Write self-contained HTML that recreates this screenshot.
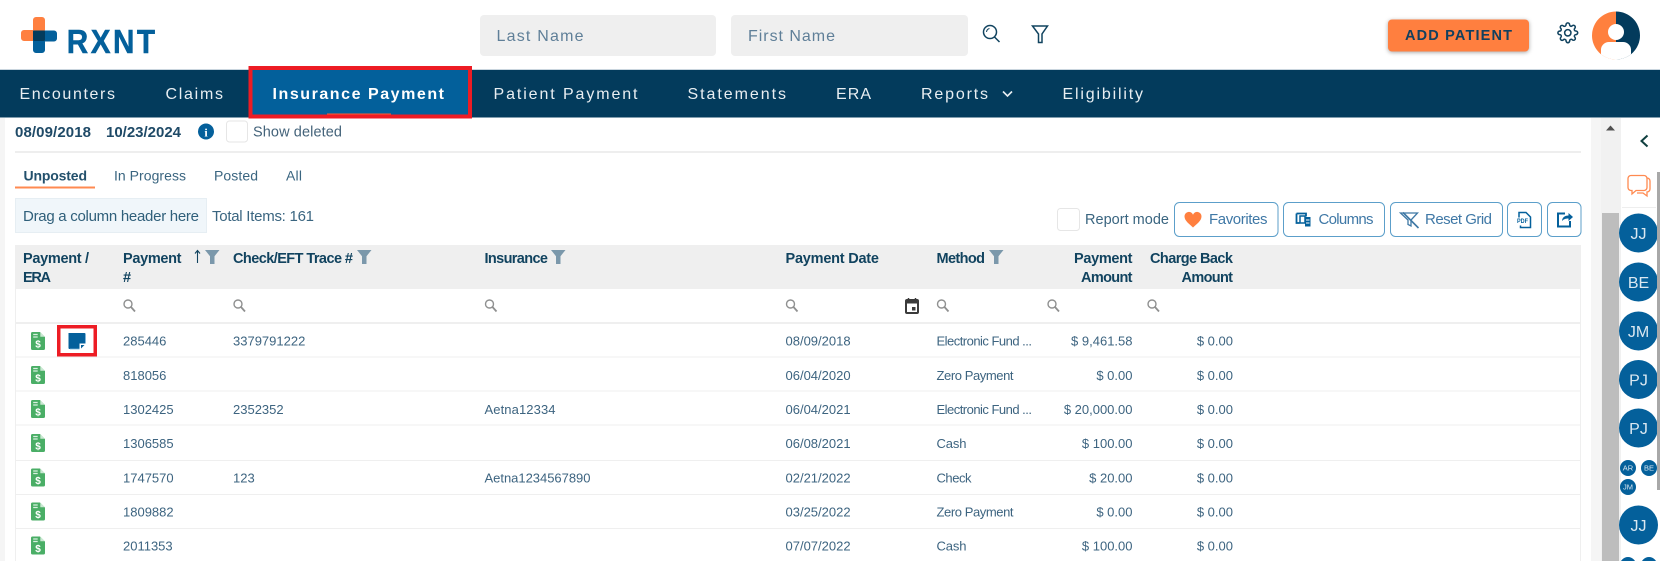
<!DOCTYPE html>
<html><head><meta charset="utf-8"><title>RXNT</title>
<style>
html,body{margin:0;padding:0;background:#fff;width:1660px;height:561px;overflow:hidden}
svg{display:block}
text{font-family:"Liberation Sans",sans-serif}
.nav{font-size:16px;fill:#e8eef2}
.r{font-size:13px;fill:#3d6480}
.h{font-size:14.5px;font-weight:bold;fill:#11435f}
.t{font-size:14.5px;fill:#3a6580}
.b{font-size:15px;fill:#3f78a6}
.av{font-size:16px;fill:#dbe8f1;text-anchor:middle}
.sm{font-size:7.5px;fill:#dbe8f1;text-anchor:middle}
</style></head><body>
<svg width="1660" height="561" viewBox="0 0 1660 561" xmlns="http://www.w3.org/2000/svg">
<defs>
<g id="s"><circle cx="5" cy="5" r="4" fill="none" stroke="#8f9090" stroke-width="1.4"/><path d="M8 8l4 4.5" stroke="#8f9090" stroke-width="1.8" fill="none"/></g>
<path id="f" d="M0 0h14.5l-5 6.2v7.8h-4.500v-7.800z" fill="#7b98ab"/>
<g id="p"><path d="M0 1.500a1.500 1.500 0 0 1 1.500-1.500h7.500l5 5v11.500a1.500 1.500 0 0 1-1.500 1.500h-11a1.500 1.500 0 0 1-1.500-1.500z" fill="#4aae66"/><path d="M9.300 0l4.700 4.700h-4.700z" fill="#c9e8d2"/><path d="M2.200 2.500h4.500M2.200 5h4.500" stroke="#d8f0df" stroke-width="1.300"/><text x="7" y="15.500" text-anchor="middle" style="font-size:10px;font-weight:bold;fill:#fff">$</text></g>
</defs>
<rect width="1660" height="561" fill="#fff"/>

<!-- logo -->
<path d="M33 20a3 3 0 0 1 3-3h6a3 3 0 0 1 3 3v10h-12z M21 33a3 3 0 0 1 3-3h21v11h-21a3 3 0 0 1-3-3z" fill="#ff8040"/>
<path d="M33 30.500h21a3 3 0 0 1 3 3v5a3 3 0 0 1-3 3h-9v8.500a3 3 0 0 1-3 3h-6a3 3 0 0 1-3-3z" fill="#04609b"/>
<rect x="33" y="30.500" width="12" height="10.500" rx="1.500" fill="#033b5c"/>
<text transform="translate(66.800,52.800) scale(.9,1)" x="0" y="0" textLength="98" lengthAdjust="spacing" style="font-size:33px;font-weight:bold;fill:#04609b;stroke:#04609b;stroke-width:.5">RXNT</text>

<!-- search inputs -->
<rect x="480" y="15" width="236" height="41" rx="4" fill="#efefef"/>
<rect x="731" y="15" width="237" height="41" rx="4" fill="#efefef"/>
<text x="496.500" y="41" textLength="87" style="font-size:16px;fill:#5f7f98">Last Name</text>
<text x="748" y="41" textLength="87" style="font-size:16px;fill:#5f7f98">First Name</text>
<g fill="none" stroke="#11435f" stroke-width="1.500"><circle cx="990" cy="32" r="6.500"/><path d="M994.500 37l5 5"/><path d="M986.500 32a4 4 0 0 1 3-3.500" stroke-width="1"/>
<path d="M1032.500 26h15l-5.500 8v8.500h-3.500v-8.500z"/></g>

<!-- add patient -->
<rect x="1388" y="19.500" width="141" height="32" rx="4" fill="#ff7f3f" style="filter:drop-shadow(0 1px 2px rgba(0,0,0,.35))"/>
<text x="1405" y="40" textLength="107" style="font-size:14.500px;font-weight:bold;fill:#11405f">ADD PATIENT</text>
<!-- gear -->
<g transform="translate(1557,22) scale(.9)" fill="none" stroke="#11435f" stroke-width="1.700"><circle cx="12" cy="12" r="3.500"/><path d="M19.400 15a1.650 1.650 0 0 0 .33 1.820l.06.06a2 2 0 0 1 0 2.830 2 2 0 0 1-2.830 0l-.06-.06a1.650 1.650 0 0 0-1.820-.33 1.650 1.650 0 0 0-1 1.510V21a2 2 0 0 1-2 2 2 2 0 0 1-2-2v-.09A1.650 1.650 0 0 0 9 19.400a1.650 1.650 0 0 0-1.820.33l-.06.06a2 2 0 0 1-2.830 0 2 2 0 0 1 0-2.830l.06-.06a1.650 1.650 0 0 0 .33-1.820 1.650 1.650 0 0 0-1.510-1H3a2 2 0 0 1-2-2 2 2 0 0 1 2-2h.09A1.650 1.650 0 0 0 4.600 9a1.650 1.650 0 0 0-.33-1.820l-.06-.06a2 2 0 0 1 0-2.830 2 2 0 0 1 2.830 0l.06.06a1.650 1.650 0 0 0 1.820.33H9a1.650 1.650 0 0 0 1-1.510V3a2 2 0 0 1 2-2 2 2 0 0 1 2 2v.09a1.650 1.650 0 0 0 1 1.510 1.650 1.650 0 0 0 1.820-.33l.06-.06a2 2 0 0 1 2.830 0 2 2 0 0 1 0 2.830l-.06.06a1.650 1.650 0 0 0-.33 1.820V9a1.650 1.650 0 0 0 1.510 1H21a2 2 0 0 1 2 2 2 2 0 0 1-2 2h-.09a1.650 1.650 0 0 0-1.510 1z"/></g>
<!-- avatar -->
<clipPath id="ac"><circle cx="1616" cy="35.500" r="24"/></clipPath>
<g clip-path="url(#ac)"><rect x="1592" y="11" width="24" height="49" fill="#ff803e"/><rect x="1616" y="11" width="24" height="49" fill="#033b5c"/>
<circle cx="1616" cy="32" r="8" fill="#fff"/><path d="M1601 60v-11a8 8 0 0 1 8-7h14a8 8 0 0 1 8 7v11z" fill="#fff"/></g>

<!-- nav -->
<rect x="0" y="69" width="1660" height="1" fill="#c9d5de"/>
<rect x="0" y="70" width="1660" height="47.500" fill="#033b5c"/>
<rect x="250.500" y="68" width="219.500" height="48.500" fill="#03609b" stroke="#ed1c24" stroke-width="4"/>
<rect x="327" y="113.500" width="64" height="1" fill="#ff5a30"/>
<text class="nav" x="19.500" y="99" textLength="95.500">Encounters</text>
<text class="nav" x="165.500" y="99" textLength="57.500">Claims</text>
<text class="nav" x="272.500" y="99" textLength="171.500" style="font-weight:bold;fill:#fff">Insurance Payment</text>
<text class="nav" x="493.500" y="99" textLength="144">Patient Payment</text>
<text class="nav" x="687.500" y="99" textLength="98.500">Statements</text>
<text class="nav" x="836" y="99" textLength="35">ERA</text>
<text class="nav" x="921" y="99" textLength="67">Reports</text>
<path d="M1003 91.500l4.500 4.500 4.500-4.500" fill="none" stroke="#e8eef2" stroke-width="1.600"/>
<text class="nav" x="1062.500" y="99" textLength="80.500">Eligibility</text>

<!-- side bands -->
<rect x="0" y="118" width="5" height="443" fill="#f5f5f5"/>
<rect x="1591" y="118" width="11" height="443" fill="#f5f5f5"/>
<rect x="1601" y="118" width="20" height="443" fill="#f1f1f1"/>
<path d="M1606 130.500l4.500-5 4.500 5z" fill="#505050"/>
<rect x="1602" y="213" width="17" height="348" fill="#bdbdbd"/>

<!-- date row -->
<text x="15" y="137" textLength="76" style="font-size:15px;font-weight:bold;fill:#1f4a67">08/09/2018</text>
<text x="106" y="137" textLength="75" style="font-size:15px;font-weight:bold;fill:#1f4a67">10/23/2024</text>
<circle cx="206" cy="131.500" r="8" fill="#04609b"/>
<text x="206" y="136.500" text-anchor="middle" style="font-size:12px;font-weight:bold;font-family:'Liberation Serif',serif;fill:#fff">i</text>
<rect x="226.500" y="121" width="21" height="21" rx="3" fill="#fff" stroke="#e6e6e6"/>
<text class="t" x="253" y="136.500" textLength="89" style="fill:#44637a">Show deleted</text>
<rect x="15" y="151" width="1566" height="2" fill="#eeeeee"/>

<!-- tabs -->
<text x="23.500" y="180.500" textLength="63.500" style="font-size:14px;font-weight:bold;fill:#23506c">Unposted</text>
<text x="114" y="180.500" textLength="72" style="font-size:14px;fill:#3a6580">In Progress</text>
<text x="214" y="180.500" textLength="44" style="font-size:14px;fill:#3a6580">Posted</text>
<text x="286" y="180.500" textLength="16" style="font-size:14px;fill:#3a6580">All</text>
<rect x="15" y="186.500" width="80" height="2" fill="#ff8a50"/>

<!-- drag box -->
<rect x="15.500" y="198.500" width="191" height="34" fill="#f0f6fa" stroke="#e6eef3"/>
<text x="23" y="221" textLength="176" style="font-size:15px;fill:#2f5f7a">Drag a column header here</text>
<text x="212" y="221" textLength="102" style="font-size:15px;fill:#3a6580">Total Items: 161</text>

<!-- toolbar -->
<rect x="1057.500" y="208.500" width="22" height="22" rx="3" fill="#fff" stroke="#e6e6e6"/>
<text class="t" x="1085" y="224" textLength="84">Report mode</text>
<g fill="#fff" stroke="#5c9fca" stroke-width="1">
<rect x="1174.500" y="202.500" width="103.500" height="34" rx="5"/>
<rect x="1283.500" y="202.500" width="101" height="34" rx="5"/>
<rect x="1390.500" y="202.500" width="112" height="34" rx="5"/>
<rect x="1507.500" y="202.500" width="34" height="34" rx="5"/>
<rect x="1547.500" y="202.500" width="33.500" height="34" rx="5"/>
</g>
<path d="M1193 227.500c-3-3-8.500-6.500-8.500-11a4.400 4.400 0 0 1 8.500-1.800 4.400 4.400 0 0 1 8.500 1.800c0 4.500-5.500 8-8.500 11z" fill="#ff7f3f"/>
<text class="b" x="1209" y="224" textLength="58.500">Favorites</text>
<!-- columns icon -->
<path d="M1296.500 213.500h9.500v3M1296.500 213.500v9.500h3" fill="none" stroke="#04609b" stroke-width="1.800"/>
<rect x="1300" y="216" width="5" height="7" fill="#fff" stroke="#04609b" stroke-width="1.500"/>
<rect x="1305" y="217" width="5.500" height="9.500" fill="#04609b"/><path d="M1306 220h3.500M1306 223h3.500" stroke="#fff" stroke-width="1"/>
<text class="b" x="1318.500" y="224" textLength="55">Columns</text>
<!-- reset icon -->
<path d="M1400.500 213h17l-6.500 7v6l-3-1.500v-4.500z" fill="none" stroke="#3e78a5" stroke-width="1.300"/>
<path d="M1403 212.500l15.500 15.500" stroke="#3e78a5" stroke-width="1.600"/>
<text class="b" x="1425" y="224" textLength="67">Reset Grid</text>
<!-- pdf icon -->
<path d="M1519 222v-9.500h7l4.500 4.500v10.500h-10v-2" fill="none" stroke="#04609b" stroke-width="1.500"/>
<rect x="1518" y="217.500" width="9" height="6" fill="#fff"/>
<text x="1522.500" y="223" text-anchor="middle" textLength="11" lengthAdjust="spacingAndGlyphs" style="font-size:6.500px;font-weight:bold;fill:#04609b">PDF</text>
<!-- export icon -->
<path d="M1565 213.500h-7v13h12v-5.500" fill="none" stroke="#04609b" stroke-width="2"/>
<path d="M1562 221c.3-3.500 2.500-5.500 6.500-5.500v-2.500l4.500 4-4.500 4v-2.500c-2.500 0-4.800.5-6.500 2.500z" fill="#04609b"/>

<!-- header -->
<rect x="15" y="245" width="1566" height="44" fill="#efefef"/>
<text class="h" x="23" y="263" textLength="66">Payment /</text>
<text class="h" x="23" y="282" textLength="28">ERA</text>
<text class="h" x="123" y="263" textLength="58.500">Payment</text>
<text class="h" x="123" y="282">#</text>
<path d="M197.500 263v-12M195 253.500l2.500-3 2.500 3" fill="none" stroke="#11435f" stroke-width="1.100"/>
<use href="#f" x="205" y="250"/>
<text class="h" x="233" y="263" textLength="120">Check/EFT Trace #</text>
<use href="#f" x="357" y="250"/>
<text class="h" x="484.500" y="263" textLength="63.500">Insurance</text>
<use href="#f" x="551" y="250"/>
<text class="h" x="785.500" y="263" textLength="93.500">Payment Date</text>
<text class="h" x="936.500" y="263" textLength="48.500">Method</text>
<use href="#f" x="989" y="250"/>
<text class="h" x="1074" y="263" textLength="58.500">Payment</text>
<text class="h" x="1081" y="282" textLength="51.500">Amount</text>
<text class="h" x="1150" y="263" textLength="83">Charge Back</text>
<text class="h" x="1181.500" y="282" textLength="51.500">Amount</text>

<!-- filter row -->
<use href="#s" x="123" y="299"/><use href="#s" x="233" y="299"/><use href="#s" x="484.500" y="299"/>
<use href="#s" x="785.500" y="299"/><use href="#s" x="936.500" y="299"/><use href="#s" x="1047" y="299"/><use href="#s" x="1147" y="299"/>
<path d="M905 301a2 2 0 0 1 2-2h10a2 2 0 0 1 2 2v11a2 2 0 0 1-2 2h-10a2 2 0 0 1-2-2z" fill="#3b3b3b"/><rect x="907" y="303.500" width="10" height="8.500" fill="#fff"/><rect x="912" y="307" width="3.500" height="3.500" fill="#3b3b3b"/><path d="M908.500 298v3M915.500 298v3" stroke="#3b3b3b" stroke-width="1.500"/>

<!-- row lines -->
<g fill="#efefef">
<rect x="15" y="322" width="1566" height="2"/>
<rect x="15" y="356.500" width="1566" height="1"/>
<rect x="15" y="390.500" width="1566" height="1"/>
<rect x="15" y="424.500" width="1566" height="1"/>
<rect x="15" y="460" width="1566" height="1"/>
<rect x="15" y="494" width="1566" height="1"/>
<rect x="15" y="528" width="1566" height="1"/>
<rect x="15" y="289" width="1" height="272"/>
<rect x="1580" y="289" width="1" height="272"/>
</g>

<!-- green icons -->
<use href="#p" x="31" y="332"/><use href="#p" x="31" y="366"/><use href="#p" x="31" y="400"/><use href="#p" x="31" y="434"/><use href="#p" x="31" y="468.500"/><use href="#p" x="31" y="502.500"/><use href="#p" x="31" y="536.500"/>

<!-- note icon + red box -->
<rect x="59" y="327" width="36" height="27.500" fill="#fdf3f3" stroke="#ed1c24" stroke-width="4"/>
<rect x="60.500" y="328.500" width="33" height="24.500" fill="#fff"/>
<path d="M68.500 333h16a1 1 0 0 1 1 1v9.500h-6v5.500h-10a1 1 0 0 1-1-1z" fill="#04609b"/>
<path d="M85.500 334v9.500M70 349h9.500" stroke="#7fb8dc" stroke-width=".8" fill="none"/>
<path d="M81 345h3.500l-3.500 3.500z" fill="#04609b"/>

<!-- rows -->
<g class="rows">
<text class="r" x="123" y="345.500">285446</text><text class="r" x="233" y="345.500">3379791222</text><text class="r" x="785.500" y="345.500">08/09/2018</text><text class="r" x="936.500" y="345.500" textLength="95.500">Electronic Fund ...</text><text class="r" x="1132.500" y="345.500" text-anchor="end">$ 9,461.58</text><text class="r" x="1233" y="345.500" text-anchor="end">$ 0.00</text>
<text class="r" x="123" y="380">818056</text><text class="r" x="785.500" y="380">06/04/2020</text><text class="r" x="936.500" y="380" textLength="77">Zero Payment</text><text class="r" x="1132.500" y="380" text-anchor="end">$ 0.00</text><text class="r" x="1233" y="380" text-anchor="end">$ 0.00</text>
<text class="r" x="123" y="414">1302425</text><text class="r" x="233" y="414">2352352</text><text class="r" x="484.500" y="414" textLength="71">Aetna12334</text><text class="r" x="785.500" y="414">06/04/2021</text><text class="r" x="936.500" y="414" textLength="95.500">Electronic Fund ...</text><text class="r" x="1132.500" y="414" text-anchor="end">$ 20,000.00</text><text class="r" x="1233" y="414" text-anchor="end">$ 0.00</text>
<text class="r" x="123" y="448">1306585</text><text class="r" x="785.500" y="448">06/08/2021</text><text class="r" x="936.500" y="448" textLength="30">Cash</text><text class="r" x="1132.500" y="448" text-anchor="end">$ 100.00</text><text class="r" x="1233" y="448" text-anchor="end">$ 0.00</text>
<text class="r" x="123" y="482.500">1747570</text><text class="r" x="233" y="482.500">123</text><text class="r" x="484.500" y="482.500" textLength="106">Aetna1234567890</text><text class="r" x="785.500" y="482.500">02/21/2022</text><text class="r" x="936.500" y="482.500" textLength="35">Check</text><text class="r" x="1132.500" y="482.500" text-anchor="end">$ 20.00</text><text class="r" x="1233" y="482.500" text-anchor="end">$ 0.00</text>
<text class="r" x="123" y="516.500">1809882</text><text class="r" x="785.500" y="516.500">03/25/2022</text><text class="r" x="936.500" y="516.500" textLength="77">Zero Payment</text><text class="r" x="1132.500" y="516.500" text-anchor="end">$ 0.00</text><text class="r" x="1233" y="516.500" text-anchor="end">$ 0.00</text>
<text class="r" x="123" y="550.500">2011353</text><text class="r" x="785.500" y="550.500">07/07/2022</text><text class="r" x="936.500" y="550.500" textLength="30">Cash</text><text class="r" x="1132.500" y="550.500" text-anchor="end">$ 100.00</text><text class="r" x="1233" y="550.500" text-anchor="end">$ 0.00</text>
</g>

<!-- right panel -->
<path d="M1647.500 135.500l-6 5.500 6 5.500" fill="none" stroke="#0f3f3f" stroke-width="2"/>
<g fill="#fff" stroke="#ff8a50" stroke-width="1.300">
<path d="M1633 178h14a3 3 0 0 1 3 3v8a3 3 0 0 1-3 3v4l-4-3h-6"/>
<path d="M1631 175.500h13a3 3 0 0 1 3 3v9a3 3 0 0 1-3 3h-8l-4 3.500v-3.500h-1a3 3 0 0 1-3-3v-9a3 3 0 0 1 3-3z"/>
</g>
<rect x="1622" y="207" width="34" height="1" fill="#eeeeee"/>
<g fill="#04609b">
<circle cx="1638.500" cy="233" r="19.500"/><circle cx="1638.500" cy="282" r="19.500"/><circle cx="1638.500" cy="331" r="19.500"/><circle cx="1638.500" cy="379.500" r="19.500"/><circle cx="1638.500" cy="428" r="19.500"/>
<circle cx="1628" cy="468" r="8"/><circle cx="1649" cy="468" r="8"/><circle cx="1628" cy="487" r="8"/>
<circle cx="1638.500" cy="525" r="19.500"/><circle cx="1628" cy="565" r="8"/><circle cx="1649" cy="565" r="8"/>
</g>
<text class="av" x="1638.500" y="239">JJ</text><text class="av" x="1638.500" y="288">BE</text><text class="av" x="1638.500" y="337">JM</text><text class="av" x="1638.500" y="385.500">PJ</text><text class="av" x="1638.500" y="434">PJ</text>
<text class="sm" x="1628" y="470.500">AR</text><text class="sm" x="1649" y="470.500">BE</text><text class="sm" x="1628" y="489.500">JM</text>
<text class="av" x="1638.500" y="531">JJ</text>
<rect x="1657" y="172" width="3" height="318" fill="#a8a8a8"/>
</svg>
</body></html>
